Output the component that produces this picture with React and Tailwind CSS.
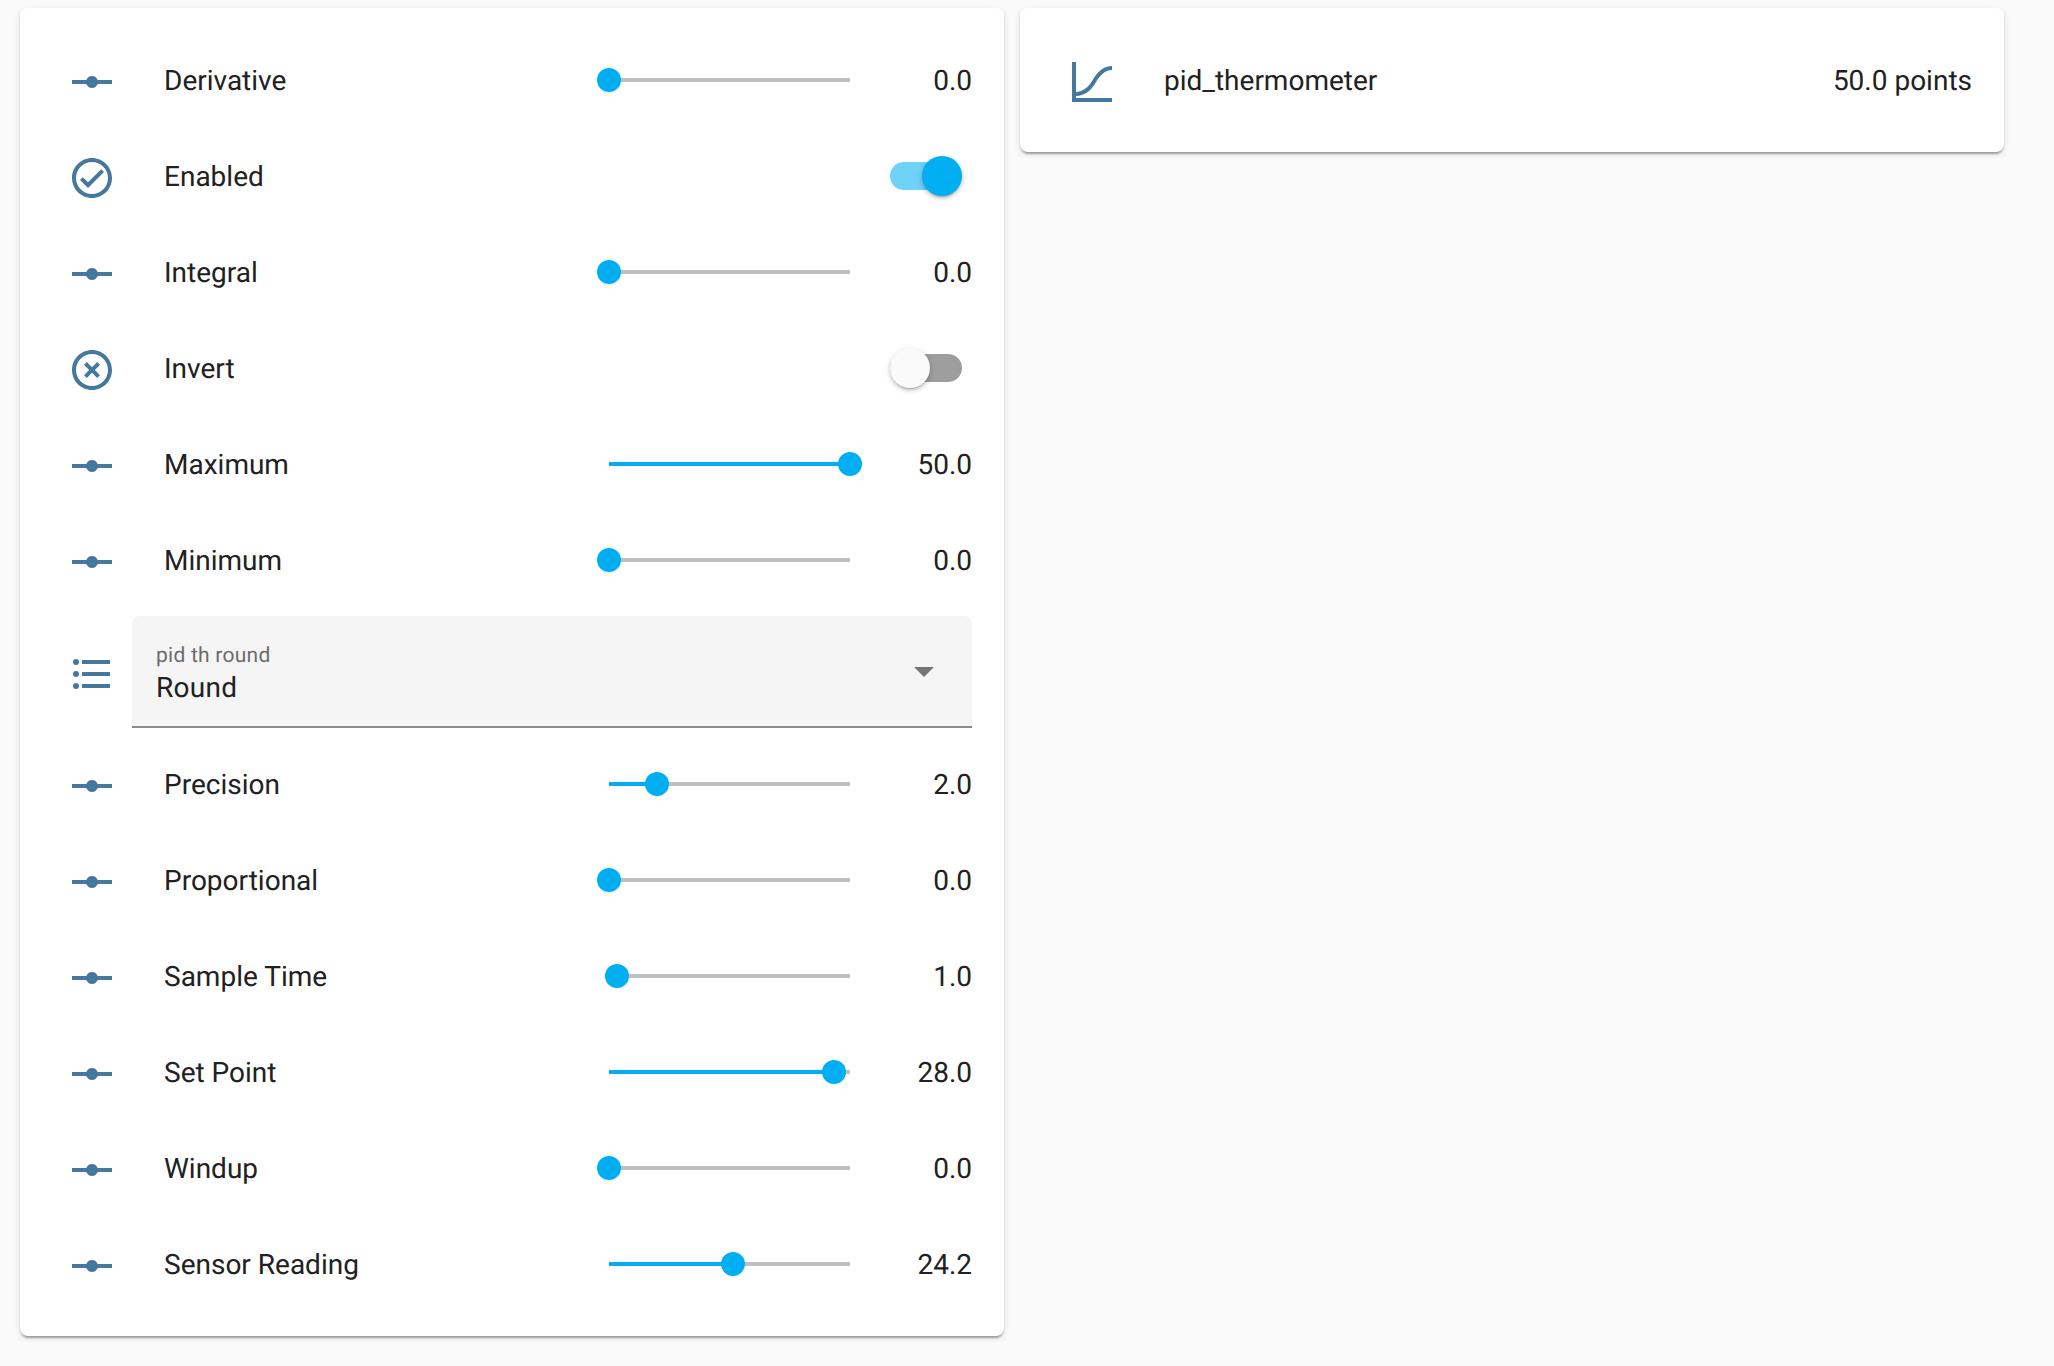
const PATHS = {
  slider: "M2,11H9.17C9.58,9.83 10.69,9 12,9C13.31,9 14.42,9.83 14.83,11H22V13H14.83C14.42,14.17 13.31,15 12,15C10.69,15 9.58,14.17 9.17,13H2V11Z",
  on: "M12 2C6.5 2 2 6.5 2 12S6.5 22 12 22 22 17.5 22 12 17.5 2 12 2M12 20C7.59 20 4 16.41 4 12S7.59 4 12 4 20 7.59 20 12 16.41 20 12 20M16.59 7.58L10 14.17L7.41 11.59L6 13L10 17L18 9L16.59 7.58Z",
  off: "M12,20C7.59,20 4,16.41 4,12C4,7.59 7.59,4 12,4C16.41,4 20,7.59 20,12C20,16.41 16.41,20 12,20M12,2C6.47,2 2,6.47 2,12C2,17.53 6.47,22 12,22C17.53,22 22,17.53 22,12C22,6.47 17.53,2 12,2M14.59,8L12,10.59L9.41,8L8,9.41L10.59,12L8,14.59L9.41,16L12,13.41L14.59,16L16,14.59L13.41,12L16,9.41L14.59,8Z",
  list: "M7,5H21V7H7V5M7,13V11H21V13H7M4,4.5A1.5,1.5 0 0,1 5.5,6A1.5,1.5 0 0,1 4,7.5A1.5,1.5 0 0,1 2.5,6A1.5,1.5 0 0,1 4,4.5M4,10.5A1.5,1.5 0 0,1 5.5,12A1.5,1.5 0 0,1 4,13.5A1.5,1.5 0 0,1 2.5,12A1.5,1.5 0 0,1 4,10.5M7,19V17H21V19H7M4,16.5A1.5,1.5 0 0,1 5.5,18A1.5,1.5 0 0,1 4,19.5A1.5,1.5 0 0,1 2.5,18A1.5,1.5 0 0,1 4,16.5Z",
  curve: "M4 19V20H22V22H2V2H4V17C7 17 10 15 12.1 11.4C15 6.4 18 4 22 4V6C18.8 6 16.3 8.1 13.8 12.4C11.3 16.7 8 19 4 19Z",
};

const CARD = "rounded-lg bg-white shadow-[0_4px_2px_-2px_rgba(0,0,0,0.2),0_2px_2px_0_rgba(0,0,0,0.14),0_2px_6px_0_rgba(0,0,0,0.12)]";

function Icon({ name }) {
  return (
    <svg className="mt-1 size-12 shrink-0 fill-[#44789f]" viewBox="0 0 24 24" aria-hidden="true">
      <path d={PATHS[name]} />
    </svg>
  );
}

function Slider({ percent }) {
  return (
    <div className="relative ml-auto h-1 w-[241px] shrink-0 bg-[#bfbfbf]">
      <div className="h-full bg-[#00aef2]" style={{ width: `${percent}%` }} />
      <span
        className="absolute top-1/2 size-6 -translate-x-1/2 -translate-y-1/2 rounded-full bg-[#00aef2]"
        style={{ left: `${percent}%` }}
      />
    </div>
  );
}

function Toggle({ on }) {
  return (
    <div className={`relative mr-[10px] ml-auto h-7 w-[72px] rounded-full ${on ? "bg-[#6fd2f9]" : "bg-[#9e9e9e]"}`}>
      <span
        className={`absolute -top-1.5 size-10 rounded-full shadow-[0_3px_2px_-2px_rgba(0,0,0,0.2),0_2px_4px_0_rgba(0,0,0,0.14),0_2px_6px_0_rgba(0,0,0,0.12)] ${
          on ? "right-0 bg-[#00aef2]" : "left-0 bg-[#fafafa]"
        }`}
      />
    </div>
  );
}

function SliderRow({ label, value, percent }) {
  return (
    <div className="flex h-24 items-center pl-4">
      <Icon name="slider" />
      <span className="mt-0.5 ml-12">{label}</span>
      <Slider percent={percent} />
      <span className="mt-0.5 w-[122px] shrink-0 text-right">{value}</span>
    </div>
  );
}

function ToggleRow({ label, on }) {
  return (
    <div className="flex h-24 items-center pl-4">
      <Icon name={on ? "on" : "off"} />
      <span className="mt-0.5 ml-12">{label}</span>
      <Toggle on={on} />
    </div>
  );
}

function SelectRow() {
  return (
    <div className="my-2 flex h-[112px] items-center pl-4">
      <Icon name="list" />
      <div className="ml-4 flex h-full flex-1 items-center justify-between rounded-t-lg border-b-2 border-[#8c8c8c] bg-[#f5f5f5] pr-[38px] pl-6">
        <div className="mt-1.5 flex flex-col tracking-[0.009em]">
          <span className="text-[21px] leading-7 text-[#6b6b6b]">pid th round</span>
          <span className="leading-9">Round</span>
        </div>
        <svg className="mt-0.5 h-[10px] w-5 fill-[#757575]" viewBox="0 0 20 10" aria-hidden="true">
          <path d="M0 0H20L10 10Z" />
        </svg>
      </div>
    </div>
  );
}

export default function App() {
  return (
    <div className="grid min-h-screen grid-cols-2 items-start gap-4 bg-[#fafafa] pt-2 pr-[50px] pl-5 font-['Roboto',sans-serif] text-[28px] text-[#212121] [text-rendering:geometricPrecision]">
      <div className={`${CARD} px-8 py-6`}>
        <SliderRow label="Derivative" value="0.0" percent={0} />
        <ToggleRow label="Enabled" on />
        <SliderRow label="Integral" value="0.0" percent={0} />
        <ToggleRow label="Invert" on={false} />
        <SliderRow label="Maximum" value="50.0" percent={100} />
        <SliderRow label="Minimum" value="0.0" percent={0} />
        <SelectRow />
        <SliderRow label="Precision" value="2.0" percent={20} />
        <SliderRow label="Proportional" value="0.0" percent={0} />
        <SliderRow label="Sample Time" value="1.0" percent={3.33} />
        <SliderRow label="Set Point" value="28.0" percent={93.33} />
        <SliderRow label="Windup" value="0.0" percent={0} />
        <SliderRow label="Sensor Reading" value="24.2" percent={51.4} />
      </div>
      <div className={`${CARD} px-8 py-6`}>
        <div className="flex h-24 items-center pl-4">
          <Icon name="curve" />
          <span className="mt-0.5 ml-12">pid_thermometer</span>
          <span className="mt-0.5 ml-auto">50.0 points</span>
        </div>
      </div>
    </div>
  );
}
